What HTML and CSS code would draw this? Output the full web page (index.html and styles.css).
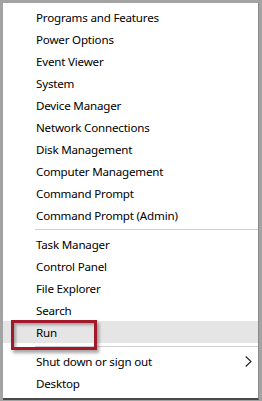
FILE: index.html
```html
<!DOCTYPE html>
<html>
<head>
<meta charset="utf-8">
<link rel="stylesheet" href="styles.css">
</head>
<body>
<div class="frame">
  <div class="menu">
    <ul class="group">
      <li class="item">Programs and Features</li>
      <li class="item">Power Options</li>
      <li class="item">Event Viewer</li>
      <li class="item">System</li>
      <li class="item">Device Manager</li>
      <li class="item">Network Connections</li>
      <li class="item">Disk Management</li>
      <li class="item">Computer Management</li>
      <li class="item">Command Prompt</li>
      <li class="item">Command Prompt (Admin)</li>
    </ul>
    <div class="sep"></div>
    <ul class="group">
      <li class="item">Task Manager</li>
      <li class="item">Control Panel</li>
      <li class="item">File Explorer</li>
      <li class="item">Search</li>
      <li class="item hover">Run<span class="callout"></span></li>
    </ul>
    <div class="sep"></div>
    <ul class="group">
      <li class="item">Shut down or sign out<svg class="chev" width="7" height="11" viewBox="0 0 7 11"><path d="M0.7 0.5 L6 5.5 L0.7 10.5" fill="none" stroke="#222" stroke-width="1.1"/></svg></li>
      <li class="item">Desktop</li>
    </ul>
  </div>
</div>
</body>
</html>
```
FILE: styles.css
```css
html, body {
  margin: 0;
  padding: 0;
  background: #a3a3a3;
}
.frame {
  width: 262px;
  height: 401px;
  box-sizing: border-box;
  padding: 3px 3px 1px 3px;
  background: #a3a3a3;
}
.menu {
  height: 100%;
  box-sizing: border-box;
  background: #fff;
  border-right: 1px solid #8a8a8a;
  border-bottom: 2px solid #4a4a4a;
  padding-top: 3px;
  font-family: "Noto Sans", "Open Sans", sans-serif;
  font-size: 11.6px;
  letter-spacing: -0.2px;
  color: #000;
}
.group {
  list-style: none;
  margin: 0;
  padding: 0;
}
.item {
  position: relative;
  height: 22px;
  box-sizing: border-box;
  padding-top: 1px;
  line-height: 21px;
  padding-left: 33px;
  white-space: nowrap;
}
.item.hover {
  background: #e5e5e5;
}
.sep {
  height: 7px;
  display: flex;
  align-items: center;
  padding-left: 32px;
}
.sep::before {
  content: "";
  display: block;
  flex: 1;
  height: 1px;
  background: #cfcfcf;
}
.chev {
  position: absolute;
  right: 6px;
  top: 6px;
}
.callout {
  position: absolute;
  left: 8px;
  top: -1px;
  width: 86px;
  height: 30px;
  box-sizing: border-box;
  border: 3px solid #a3192a;
  box-shadow: 2px 3px 3px rgba(0,0,0,0.35), inset 2px 2px 3px rgba(0,0,0,0.3);
}
```
